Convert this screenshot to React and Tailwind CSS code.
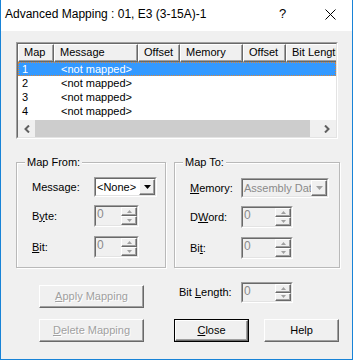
import React from 'react';

const raised =
  'border border-t-white border-l-white border-b-[#696969] border-r-[#696969] shadow-[inset_-1px_-1px_0_#a0a0a0] bg-[#f0f0f0]';
const sunkenOuter = 'border border-t-[#a0a0a0] border-l-[#a0a0a0] border-b-white border-r-white';
const sunkenInner = 'border border-t-[#696969] border-l-[#696969] border-b-[#e3e3e3] border-r-[#e3e3e3]';

function SpinArrow({ up }) {
  return (
    <svg width="5" height="3" viewBox="0 0 5 3">
      <polygon points={up ? '2.5,0 5,3 0,3' : '0,0 5,0 2.5,3'} fill="#a0a0a0" />
    </svg>
  );
}

function Spin({ width, height = 22 }) {
  return (
    <div className={`${sunkenOuter} ${width} ${height === 22 ? 'h-[22px]' : 'h-[21px]'}`}>
      <div className={`${sunkenInner} h-full flex bg-[#f0f0f0]`}>
        <span className="flex-1 pl-[1px] leading-[14px] text-[12px] text-[#8a8a8a]">0</span>
        <div className="w-[16px] flex flex-col">
          <div className={`${raised} flex-1 flex items-center justify-center`}>
            <SpinArrow up />
          </div>
          <div className={`${raised} flex-1 flex items-center justify-center`}>
            <SpinArrow />
          </div>
        </div>
      </div>
    </div>
  );
}

function Combo({ width, text, disabled }) {
  return (
    <div className={`${sunkenOuter} ${width} h-[20px]`}>
      <div className={`${sunkenInner} h-full flex ${disabled ? 'bg-[#f0f0f0]' : 'bg-white'}`}>
        <span
          className={`flex-1 overflow-hidden whitespace-nowrap pl-[1px] leading-[16px] text-[11px] ${
            disabled ? 'text-[#8a8a8a]' : 'text-black'
          }`}
        >
          {text}
        </span>
        <div className={`${raised} w-[16px] shrink-0 flex items-center justify-center`}>
          <svg width="7" height="4" viewBox="0 0 7 4">
            <polygon points="0,0 7,0 3.5,4" fill={disabled ? '#a0a0a0' : '#000'} />
          </svg>
        </div>
      </div>
    </div>
  );
}

function Btn({ w, children, disabled, isDefault }) {
  return (
    <div className={`${w} h-[23px] ${isDefault ? 'border border-black' : ''}`}>
      <div
        className={`${raised} h-full flex items-center justify-center ${
          disabled ? 'text-[#a0a0a0] [text-shadow:1px_1px_0_#fff]' : 'text-black'
        }`}
      >
        {children}
      </div>
    </div>
  );
}

function Group({ title, width, children }) {
  return (
    <div className={`relative ${width} h-[106px] border border-[#b9b9b9] shadow-[inset_1px_1px_0_#fff,1px_1px_0_#fff]`}>
      <span className="absolute -top-[8px] left-[8px] bg-[#f0f0f0] px-[2px] leading-[14px]">{title}</span>
      {children}
    </div>
  );
}

const headers = [
  ['Map', 'w-[36px]'],
  ['Message', 'w-[84px]'],
  ['Offset', 'w-[42px]'],
  ['Memory', 'w-[63px]'],
  ['Offset', 'w-[43px]'],
  ['Bit Length', 'w-[60px]'],
];

export default function App() {
  return (
    <div className="w-[353px] h-[360px] flex flex-col bg-[#f0f0f0] border-x border-b border-[#1883d7] font-['Liberation_Sans',Arial,sans-serif] text-[11px] text-black overflow-hidden">
      {/* Title bar */}
      <div className="h-[31px] bg-white flex items-start pt-[6px] shrink-0">
        <span className="ml-[4px] text-[12px] leading-[16px]">Advanced Mapping : 01, E3 (3-15A)-1</span>
        <span className="ml-auto text-[13px] leading-[16px] w-[10px] mr-[36px]">?</span>
        <svg width="11" height="11" viewBox="0 0 11 11" className="mt-[3px] mr-[16px]">
          <path d="M0.5 0.5 L10.5 10.5 M10.5 0.5 L0.5 10.5" stroke="#000" strokeWidth="1" />
        </svg>
      </div>

      {/* List view */}
      <div className={`${sunkenOuter} ml-[15px] mt-[11px] w-[322px] h-[97px]`}>
        <div className={`${sunkenInner} h-full bg-white flex flex-col overflow-hidden`}>
          <div className="flex h-[18px] shrink-0">
            {headers.map(([t, w], i) => (
              <div key={i} className={`${raised} ${w} shrink-0 pl-[5px] leading-[15px] whitespace-nowrap overflow-hidden`}>
                {t}
              </div>
            ))}
          </div>
          {[1, 2, 3, 4].map((n) => (
            <div
              key={n}
              className={`flex h-[14px] shrink-0 leading-[12px] ${
                n === 1 ? 'bg-[#3399ff] text-white border border-dotted border-[#d9863a]' : 'border border-transparent'
              }`}
            >
              <span className="w-[36px] pl-[3px]">{n}</span>
              <span className="pl-[6px]">&lt;not mapped&gt;</span>
            </div>
          ))}
          <div className="flex-1" />
          <div className="flex h-[17px] shrink-0 bg-[#f0f0f0]">
            <div className="w-[17px] flex items-center justify-center">
              <svg width="6" height="8" viewBox="0 0 6 8">
                <polyline points="5,0.5 1.5,4 5,7.5" fill="none" stroke="#606060" strokeWidth="2" />
              </svg>
            </div>
            <div className="w-[275px] bg-[#cdcdcd]" />
            <div className="flex-1 flex items-center justify-end pr-[6px]">
              <svg width="6" height="8" viewBox="0 0 6 8">
                <polyline points="1,0.5 4.5,4 1,7.5" fill="none" stroke="#606060" strokeWidth="2" />
              </svg>
            </div>
          </div>
        </div>
      </div>

      {/* Groups */}
      <div className="flex ml-[15px] mt-[23px] gap-[8px]">
        <Group title="Map From:" width="w-[150px]">
          <div className="flex flex-col pl-[15px] pt-[14px]">
            <div className="flex items-center">
              <span className="w-[62px]">
                Messa<span className="underline">g</span>e:
              </span>
              <Combo width="w-[63px]" text="<None>" />
            </div>
            <div className="flex items-center mt-[8px]">
              <span className="w-[62px]">
                B<span className="underline">y</span>te:
              </span>
              <Spin width="w-[45px]" />
            </div>
            <div className="flex items-center mt-[9px]">
              <span className="w-[62px]">
                <span className="underline">B</span>it:
              </span>
              <Spin width="w-[45px]" />
            </div>
          </div>
        </Group>
        <Group title="Map To:" width="w-[166px]">
          <div className="flex flex-col pl-[15px] pt-[15px]">
            <div className="flex items-center">
              <span className="w-[51px]">
                <span className="underline">M</span>emory:
              </span>
              <Combo width="w-[88px]" text="Assembly Data" disabled />
            </div>
            <div className="flex items-center mt-[8px]">
              <span className="w-[51px]">
                D<span className="underline">W</span>ord:
              </span>
              <Spin width="w-[52px]" />
            </div>
            <div className="flex items-center mt-[9px]">
              <span className="w-[51px]">
                Bi<span className="underline">t</span>:
              </span>
              <Spin width="w-[52px]" />
            </div>
          </div>
        </Group>
      </div>

      {/* Bottom buttons */}
      <div className="flex items-start ml-[38px] mt-[14px]">
        <div className="mt-[3px]">
          <Btn w="w-[105px]" disabled>
            <span>
              <span className="underline">A</span>pply Mapping
            </span>
          </Btn>
        </div>
        <div className="flex items-center ml-[35px]">
          <span className="w-[62px]">
            Bit <span className="underline">L</span>ength:
          </span>
          <Spin width="w-[52px]" height={21} />
        </div>
      </div>
      <div className="flex ml-[38px] mt-[11px]">
        <Btn w="w-[105px]" disabled>
          <span>
            <span className="underline">D</span>elete Mapping
          </span>
        </Btn>
        <div className="ml-[30px]">
          <Btn w="w-[75px]" isDefault>
            <span>
              <span className="underline">C</span>lose
            </span>
          </Btn>
        </div>
        <div className="ml-[15px]">
          <Btn w="w-[75px]">Help</Btn>
        </div>
      </div>
    </div>
  );
}
